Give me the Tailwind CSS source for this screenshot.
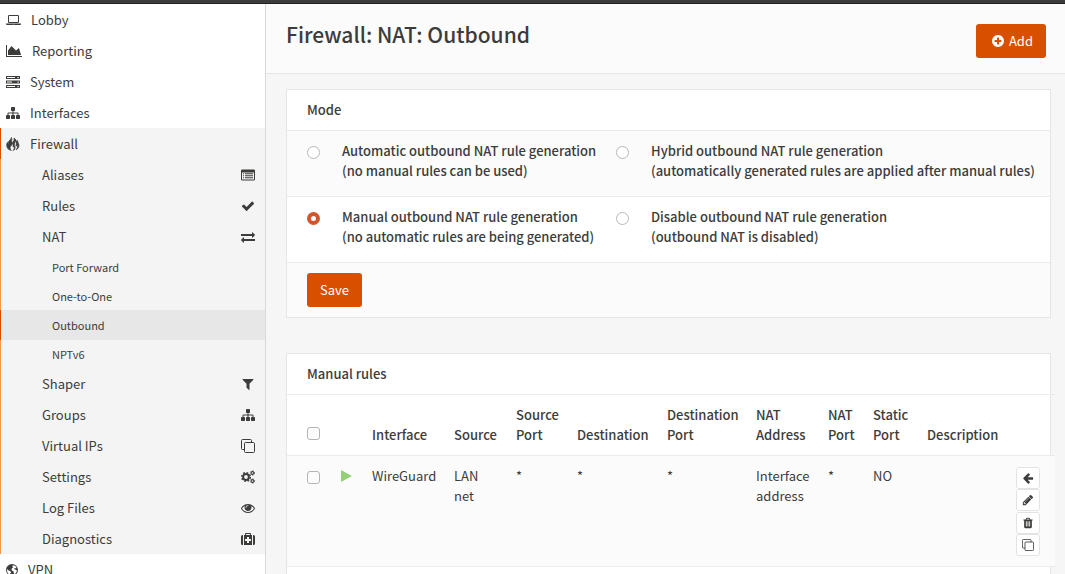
<!DOCTYPE html>
<html lang="en">
<head>
<meta charset="utf-8">
<title>Firewall: NAT: Outbound</title>
<script src="https://cdn.jsdelivr.net/npm/@tailwindcss/browser@4"></script>
</head>
<body class="bg-[#f6f6f6] font-['Source_Sans_Pro','Noto_Sans_CJK_SC',sans-serif] text-[13px] leading-5 text-[#3c3c3b]">
<svg class="hidden" aria-hidden="true">
  <symbol id="laptop" viewBox="0 0 1920 1792"><path d="M416 1280q-66 0-113-47t-47-113v-704q0-66 47-113t113-47h1088q66 0 113 47t47 113v704q0 66-47 113t-113 47h-1088zm-32-864v704q0 13 9.500 22.500t22.500 9.500h1088q13 0 22.500-9.500t9.500-22.500v-704q0-13-9.500-22.500t-22.500-9.500h-1088q-13 0-22.500 9.500t-9.500 22.500zm1376 928h160v96q0 40-47 68t-113 28h-1600q-66 0-113-28t-47-68v-96h1760zm-720 96q16 0 16-16t-16-16h-160q-16 0-16 16t16 16h160z"/></symbol>
  <symbol id="chart" viewBox="0 0 2048 1792"><path d="M2048 1536v128h-2048v-1536h128v1408h1920zm-384-1024l256 896h-1664v-576l448-576 576 576z"/></symbol>
  <symbol id="server" viewBox="0 0 1792 1792"><path fill-rule="evenodd" d="M0 128h1792v384H0zM128 256v128h1024v-128zM1472 240v160h160v-160zM0 704h1792v384H0zM128 832v128h640v-128zM1472 816v160h160v-160zM0 1280h1792v384H0zM128 1408v128h1024v-128zM1472 1392v160h160v-160z"/></symbol>
  <symbol id="sitemap" viewBox="0 0 1792 1792"><path d="M1792 1248v320q0 40-28 68t-68 28h-320q-40 0-68-28t-28-68v-320q0-40 28-68t68-28h96v-192h-512v192h96q40 0 68 28t28 68v320q0 40-28 68t-68 28h-320q-40 0-68-28t-28-68v-320q0-40 28-68t68-28h96v-192h-512v192h96q40 0 68 28t28 68v320q0 40-28 68t-68 28h-320q-40 0-68-28t-28-68v-320q0-40 28-68t68-28h96v-192q0-52 38-90t90-38h512v-192h-96q-40 0-68-28t-28-68v-320q0-40 28-68t68-28h320q40 0 68 28t28 68v320q0 40-28 68t-68 28h-96v192h512q52 0 90 38t38 90v192h96q40 0 68 28t28 68z"/></symbol>
  <symbol id="fire" viewBox="0 0 14 14"><path stroke="currentColor" stroke-width=".7" stroke-linejoin="round" d="M5.500.500C5 2.800 2.200 3.800 2.200 6.200c0 .8.300 1.500.3 1.500S1.400 7 1.500 5.300C.6 6.800.6 7.700.8 9.200c.4 2.500 2.400 3.800 4.500 4.200C4.200 12.500 3.700 11 4.500 9.600 5.400 8.300 6.300 8 6.200 6.300c1.200 1.200 1.300 2.600.7 3.700.7 0 1-.5 1.200-1 .6 1.800.2 3.300-1.100 4.400 1.600-.3 2.200-1.600 2.100-3-.1-1.700-1-2.500-.6-4C8.900 5.400 9.200 5 9 3.800c1.200 1 1.500 2.300 1.200 3.400-.2.900-.3 1.500.2 1.900.5-.3.600-.8.600-1.300.8 1.300.5 3.400-.8 5 2-1 3-3 2.700-5-.3-1.800-1.400-2.300-1.200-4.200-.8.300-1.100 1.100-1.100 1.800C10.200 3.300 9.500 1.800 8 1.100c.3 1.300.1 2.300-.7 3.300C6.700 5.100 6.400 5.300 6.200 6 4.900 4.400 6.300 2.500 5.500.5z"/></symbol>
  <symbol id="globe" viewBox="0 0 12 14"><path fill-rule="evenodd" d="M6 1a6 6 0 1 0 0 12A6 6 0 1 0 6 1zM6.800 2.200 9 2.800l1.500 1.700-.5.800-1.200-.2-.6.800 1 .6 1.300.4.400 1.200-1 2-1.400 1.300-.8-1.600-.2-1.500-1.300-.5-.8-1.400.6-1.200 1.200-.6-.8-.9.200-.7zM1.300 6l1 1.200 1.500.7 1.300.9-.3 1.200-.8.700-.2 1C2.200 10.900 1 9.200 1 7.200z"/></symbol>
  <symbol id="listalt" viewBox="0 0 14 14"><path fill-rule="evenodd" d="M1.200 1.500h11.600a1.200 1.200 0 0 1 1.200 1.200v8.600a1.200 1.200 0 0 1-1.200 1.200H1.200A1.200 1.200 0 0 1 0 11.300V2.700a1.200 1.200 0 0 1 1.200-1.200zM1 4.500v7h12v-7zM2 5.300h1v1H2zm2 0h8v1H4zM2 7.300h1v1H2zm2 0h8v1H4zM2 9.300h1v1H2zm2 0h8v1H4z"/></symbol>
  <symbol id="check" viewBox="0 0 1792 1792"><path d="M1671 566q0 40-28 68l-724 724-136 136q-28 28-68 28t-68-28l-136-136-362-362q-28-28-28-68t28-68l136-136q28-28 68-28t68 28l294 295 656-657q28-28 68-28t68 28l136 136q28 28 28 68z"/></symbol>
  <symbol id="exchange" viewBox="0 0 1792 1792"><path d="M1792 1184v192q0 13-9.500 22.500t-22.500 9.500h-1376v192q0 13-9.500 22.500t-22.500 9.500q-12 0-24-10l-319-320q-9-9-9-22 0-14 9-23l320-320q9-9 23-9 13 0 22.500 9.500t9.500 22.500v192h1376q13 0 22.500 9.500t9.500 22.500zm0-544q0 14-9 23l-320 320q-9 9-23 9-13 0-22.500-9.500t-9.500-22.500v-192h-1376q-13 0-22.500-9.500t-9.500-22.500v-192q0-13 9.500-22.500t22.500-9.500h1376v-192q0-14 9-23t23-9q12 0 24 10l319 319q9 9 9 23z"/></symbol>
  <symbol id="filter" viewBox="0 0 1792 1792"><path d="M1595 295q17 41-14 70l-493 493v742q0 42-39 59-13 5-25 5-27 0-45-19l-256-256q-19-19-19-45v-486l-493-493q-31-29-14-70 17-39 59-39h1280q42 0 59 39z"/></symbol>
  <symbol id="clone" viewBox="0 0 14 14"><path fill="none" stroke="currentColor" d="M4.500 3.500h8a1 1 0 0 1 1 1v8a1 1 0 0 1-1 1h-8a1 1 0 0 1-1-1v-8a1 1 0 0 1 1-1zM3.500 10.500h-2a1 1 0 0 1-1-1v-8a1 1 0 0 1 1-1h8a1 1 0 0 1 1 1v2"/></symbol>
  <symbol id="cogs" viewBox="0 0 14 14"><g fill="none" stroke="currentColor"><circle cx="5" cy="7" r="2.900" stroke-width="2"/><circle cx="5" cy="7" r="4.400" stroke-width="1.300" stroke-dasharray="1.730 1.726"/><circle cx="11.500" cy="3" r="1.400" stroke-width="1.100"/><circle cx="11.500" cy="3" r="2.200" stroke-width=".8" stroke-dasharray="1.100 1.204"/><circle cx="11.500" cy="11" r="1.400" stroke-width="1.100"/><circle cx="11.500" cy="11" r="2.200" stroke-width=".8" stroke-dasharray="1.100 1.204"/></g></symbol>
  <symbol id="eye" viewBox="0 0 1792 1792"><path d="M1664 960q-152-236-381-353 61 104 61 225 0 185-131.500 316.500t-316.500 131.500-316.500-131.500-131.500-316.500q0-121 61-225-229 117-381 353 133 205 333.500 326.500t434.500 121.500 434.500-121.500 333.500-326.500zm-720-384q0-20-14-34t-34-14q-125 0-214.500 89.500t-89.500 214.500q0 20 14 34t34 14 34-14 14-34q0-86 61-147t147-61q20 0 34-14t14-34zm848 384q0 34-20 69-140 230-376.500 368.500t-499.500 138.500-499.500-139-376.500-368q-20-35-20-69t20-69q140-229 376.500-368t499.500-139 499.500 139 376.500 368q20 35 20 69z"/></symbol>
  <symbol id="medkit" viewBox="0 0 14 14"><path fill-rule="evenodd" d="M4 3V1.800Q4 1 4.800 1h4.400q.8 0 .8.800V3h1v10H3V3zm1 0h4V2H5zM6 5v2H4v2h2v2h2V9h2V7H8V5zM1.500 3H2v10h-.5Q0 13 0 11.500v-7Q0 3 1.500 3zM12 3h.5Q14 3 14 4.500v7q0 1.500-1.500 1.500H12z"/></symbol>
  <symbol id="plus" viewBox="0 0 1792 1792"><path d="M1344 960v-128q0-26-19-45t-45-19h-256v-256q0-26-19-45t-45-19h-128q-26 0-45 19t-19 45v256h-256q-26 0-45 19t-19 45v128q0 26 19 45t45 19h256v256q0 26 19 45t45 19h128q26 0 45-19t19-45v-256h256q26 0 45-19t19-45zm320-64q0 209-103 385.500t-279.500 279.500-385.500 103-385.500-103-279.500-279.500-103-385.500 103-385.500 279.500-279.500 385.500-103 385.500 103 279.500 279.500 103 385.500z"/></symbol>
  <symbol id="left" viewBox="0 0 1792 1792"><path d="M1664 896v128q0 53-32.500 90.500t-84.500 37.500h-704l293 294q38 36 38 90t-38 90l-75 76q-37 37-90 37-52 0-91-37l-651-652q-37-37-37-90 0-52 37-91l651-650q38-38 91-38 52 0 90 38l75 74q38 38 38 91t-38 91l-293 293h704q52 0 84.500 37.500t32.500 90.500z"/></symbol>
  <symbol id="pencil" viewBox="0 0 1792 1792"><path d="M491 1536l91-91-235-235-91 91v107h128v128h107zm523-928q0-22-22-22-10 0-17 7l-542 542q-7 7-7 17 0 22 22 22 10 0 17-7l542-542q7-7 7-17zm-54-192l416 416-832 832h-416v-416zm683 96q0 53-37 90l-166 166-416-416 166-165q36-38 90-38 53 0 91 38l235 234q37 39 37 91z"/></symbol>
  <symbol id="trash" viewBox="0 0 1792 1792"><path d="M704 1376v-704q0-14-9-23t-23-9h-64q-14 0-23 9t-9 23v704q0 14 9 23t23 9h64q14 0 23-9t9-23zm256 0v-704q0-14-9-23t-23-9h-64q-14 0-23 9t-9 23v704q0 14 9 23t23 9h64q14 0 23-9t9-23zm256 0v-704q0-14-9-23t-23-9h-64q-14 0-23 9t-9 23v704q0 14 9 23t23 9h64q14 0 23-9t9-23zm-544-992h448l-48-117q-7-9-17-11h-317q-10 2-17 11zm928 32v64q0 14-9 23t-23 9h-96v948q0 83-47 143.500t-113 60.500h-832q-66 0-113-58.500t-47-141.500v-952h-96q-14 0-23-9t-9-23v-64q0-14 9-23t23-9h309l70-167q15-37 54-63t79-26h320q40 0 79 26t54 63l70 167h309q14 0 23 9t9 23z"/></symbol>
</svg>

<div class="h-1 border-b border-[#222] bg-[#3c3c3b]"></div>
<div class="flex min-h-[calc(100vh-4px)]">
  <nav class="w-[266px] shrink-0 border-r border-[#d9d9d9] bg-white" aria-label="Main">
    <a href="#" class="flex h-[31px] items-center gap-[10px] pl-[6px]"><svg class="h-[14px] w-[15px] fill-current"><use href="#laptop"/></svg>Lobby</a>
    <a href="#" class="flex h-[31px] items-center gap-[10px] pl-[6px]"><svg class="h-[14px] w-4 fill-current"><use href="#chart"/></svg>Reporting</a>
    <a href="#" class="flex h-[31px] items-center gap-[10px] pl-[6px]"><svg class="h-[14px] w-[14px] fill-current"><use href="#server"/></svg>System</a>
    <a href="#" class="flex h-[31px] items-center gap-[10px] pl-[6px]"><svg class="h-[14px] w-[14px] fill-current"><use href="#sitemap"/></svg>Interfaces</a>
    <div class="bg-[#f4f4f4]">
      <a href="#" class="flex h-[31px] items-center gap-[10px] border-l border-[#d94f00] pl-[5px]"><svg class="h-[14px] w-[14px] fill-current"><use href="#fire"/></svg>Firewall</a>
      <div class="border-l border-[#f09a50]">
        <a href="#" class="flex h-[31px] items-center justify-between pr-[10px] pl-[41px]">Aliases<svg class="h-[14px] w-[14px] fill-current"><use href="#listalt"/></svg></a>
        <a href="#" class="flex h-[31px] items-center justify-between pr-[10px] pl-[41px]">Rules<svg class="h-[14px] w-[14px] fill-current"><use href="#check"/></svg></a>
        <a href="#" class="flex h-[31px] items-center justify-between pr-[10px] pl-[41px]">NAT<svg class="h-[14px] w-[14px] fill-current"><use href="#exchange"/></svg></a>
        <div class="text-[11px]">
          <a href="#" class="flex h-[29px] items-center pl-[51px]">Port Forward</a>
          <a href="#" class="flex h-[29px] items-center pl-[51px]">One-to-One</a>
          <a href="#" aria-current="page" class="-ml-px flex h-[30px] items-center border-l border-[#d94f00] bg-[#e7e7e7] pl-[51px]">Outbound</a>
          <a href="#" class="flex h-[28px] items-center pl-[51px]">NPTv6</a>
        </div>
        <a href="#" class="flex h-[31px] items-center justify-between pr-[10px] pl-[41px]">Shaper<svg class="h-[14px] w-[14px] fill-current"><use href="#filter"/></svg></a>
        <a href="#" class="flex h-[31px] items-center justify-between pr-[10px] pl-[41px]">Groups<svg class="h-[14px] w-[14px] fill-current"><use href="#sitemap"/></svg></a>
        <a href="#" class="flex h-[31px] items-center justify-between pr-[10px] pl-[41px]">Virtual IPs<svg class="h-[14px] w-[14px] fill-current"><use href="#clone"/></svg></a>
        <a href="#" class="flex h-[31px] items-center justify-between pr-[10px] pl-[41px]">Settings<svg class="h-[14px] w-[14px] fill-current"><use href="#cogs"/></svg></a>
        <a href="#" class="flex h-[31px] items-center justify-between pr-[10px] pl-[41px]">Log Files<svg class="h-[14px] w-[14px] fill-current"><use href="#eye"/></svg></a>
        <a href="#" class="flex h-[31px] items-center justify-between pr-[10px] pl-[41px]">Diagnostics<svg class="h-[14px] w-[14px] fill-current"><use href="#medkit"/></svg></a>
      </div>
    </div>
    <a href="#" class="flex h-[31px] items-center gap-[10px] pl-[6px]"><svg class="h-[14px] w-3 fill-current"><use href="#globe"/></svg>VPN</a>
  </nav>

  <main class="min-w-0 flex-1">
    <header class="flex items-start justify-between border-b border-[#e5e5e5] bg-[#fbfbfb] pt-5 pr-[19px] pb-[15px] pl-5">
      <h1 class="text-[21px] leading-5 font-medium">Firewall: NAT: Outbound</h1>
      <button type="button" class="flex h-[34px] items-center gap-1 rounded-[3px] bg-[#d94f00] pr-[13px] pl-[15px] text-white"><svg class="h-[14px] w-[14px] fill-current"><use href="#plus"/></svg>Add</button>
    </header>

    <div class="flex flex-col gap-[35px] pt-[15px] pr-[14px] pl-5">
      <section class="border border-[#e5e5e5] bg-white">
        <h2 class="px-5 py-[10px] font-medium">Mode</h2>
        <form>
          <div class="grid grid-cols-[309px_1fr] border-t border-[#ebebeb] bg-[#fbfbfb] pt-[10px] pb-[15px] pl-5 font-medium">
            <label class="flex gap-[22px]"><input type="radio" name="mode" class="mt-[5px] h-[13px] w-[13px] shrink-0 appearance-none rounded-full border border-[#b8b8b8] bg-white checked:border-4 checked:border-[#d1562a]"><span>Automatic outbound NAT rule generation<br>(no manual rules can be used)</span></label>
            <label class="flex gap-[22px]"><input type="radio" name="mode" class="mt-[5px] h-[13px] w-[13px] shrink-0 appearance-none rounded-full border border-[#b8b8b8] bg-white checked:border-4 checked:border-[#d1562a]"><span>Hybrid outbound NAT rule generation<br>(automatically generated rules are applied after manual rules)</span></label>
          </div>
          <div class="grid grid-cols-[309px_1fr] border-t border-[#ebebeb] pt-[10px] pb-[15px] pl-5 font-medium">
            <label class="flex gap-[22px]"><input type="radio" name="mode" checked class="mt-[5px] h-[13px] w-[13px] shrink-0 appearance-none rounded-full border border-[#b8b8b8] bg-white checked:border-4 checked:border-[#d1562a]"><span>Manual outbound NAT rule generation<br>(no automatic rules are being generated)</span></label>
            <label class="flex gap-[22px]"><input type="radio" name="mode" class="mt-[5px] h-[13px] w-[13px] shrink-0 appearance-none rounded-full border border-[#b8b8b8] bg-white checked:border-4 checked:border-[#d1562a]"><span>Disable outbound NAT rule generation<br>(outbound NAT is disabled)</span></label>
          </div>
          <div class="border-t border-[#ebebeb] bg-[#fbfbfb] px-5 py-[10px]">
            <button type="button" class="block h-[34px] rounded-[3px] bg-[#d94f00] px-[13px] text-white">Save</button>
          </div>
        </form>
      </section>

      <section class="border border-[#e5e5e5] bg-white pb-10">
        <h2 class="px-5 py-[10px] font-medium">Manual rules</h2>
        <table class="w-[calc(100%+5px)] table-fixed">
          <colgroup><col class="w-[44px]"><col class="w-[31px]"><col class="w-[82px]"><col class="w-[62px]"><col class="w-[61px]"><col class="w-[90px]"><col class="w-[89px]"><col class="w-[72px]"><col class="w-[45px]"><col class="w-[54px]"><col class="w-[89px]"><col class="w-[49px]"></colgroup>
          <thead>
            <tr class="border-y border-[#ebebeb] text-left align-bottom [&>th]:py-[10px] [&>th]:pl-[10px] [&>th]:font-medium">
              <th><input type="checkbox" aria-label="Select all rules" class="mb-[5px] ml-[10px] block h-[13px] w-[13px] appearance-none rounded-[3px] border border-[#b4b4b4] bg-[#fcfcfc]"></th>
              <th></th><th>Interface</th><th>Source</th><th>Source Port</th><th>Destination</th><th>Destination Port</th><th>NAT Address</th><th>NAT Port</th><th>Static Port</th><th>Description</th><th></th>
            </tr>
          </thead>
          <tbody>
            <tr class="border-b border-[#ebebeb] bg-[#fbfbfb] align-top [&>td]:py-[10px] [&>td]:pl-[10px]">
              <td><input type="checkbox" aria-label="Select rule" class="mt-[5px] ml-[10px] block h-[13px] w-[13px] appearance-none rounded-[3px] border border-[#b4b4b4] bg-[#fcfcfc]"></td>
              <td><button type="button" aria-label="Disable rule" class="block pt-1"><svg class="h-3 w-[11px] fill-[#94d07a]" viewBox="0 0 11 12"><path d="M0 0l11 6L0 12z"/></svg></button></td>
              <td>WireGuard</td><td>LAN<br>net</td><td>*</td><td>*</td><td>*</td><td>Interface address</td><td>*</td><td>NO</td><td></td>
              <td>
                <div class="flex h-[90px] w-6 flex-col justify-between pt-px">
                  <button type="button" aria-label="Move here" class="flex h-[22px] items-center justify-center rounded-[3px] border border-[#e3e3e3] bg-white"><svg class="h-3 w-3 fill-current"><use href="#left"/></svg></button>
                  <button type="button" aria-label="Edit" class="flex h-[22px] items-center justify-center rounded-[3px] border border-[#e3e3e3] bg-white"><svg class="h-3 w-3 fill-current"><use href="#pencil"/></svg></button>
                  <button type="button" aria-label="Delete" class="flex h-[22px] items-center justify-center rounded-[3px] border border-[#e3e3e3] bg-white"><svg class="h-3 w-3 fill-current"><use href="#trash"/></svg></button>
                  <button type="button" aria-label="Clone" class="flex h-[22px] items-center justify-center rounded-[3px] border border-[#e3e3e3] bg-white"><svg class="h-3 w-3 fill-current"><use href="#clone"/></svg></button>
                </div>
              </td>
            </tr>
          </tbody>
        </table>
      </section>
    </div>
  </main>
</div>
</body>
</html>
